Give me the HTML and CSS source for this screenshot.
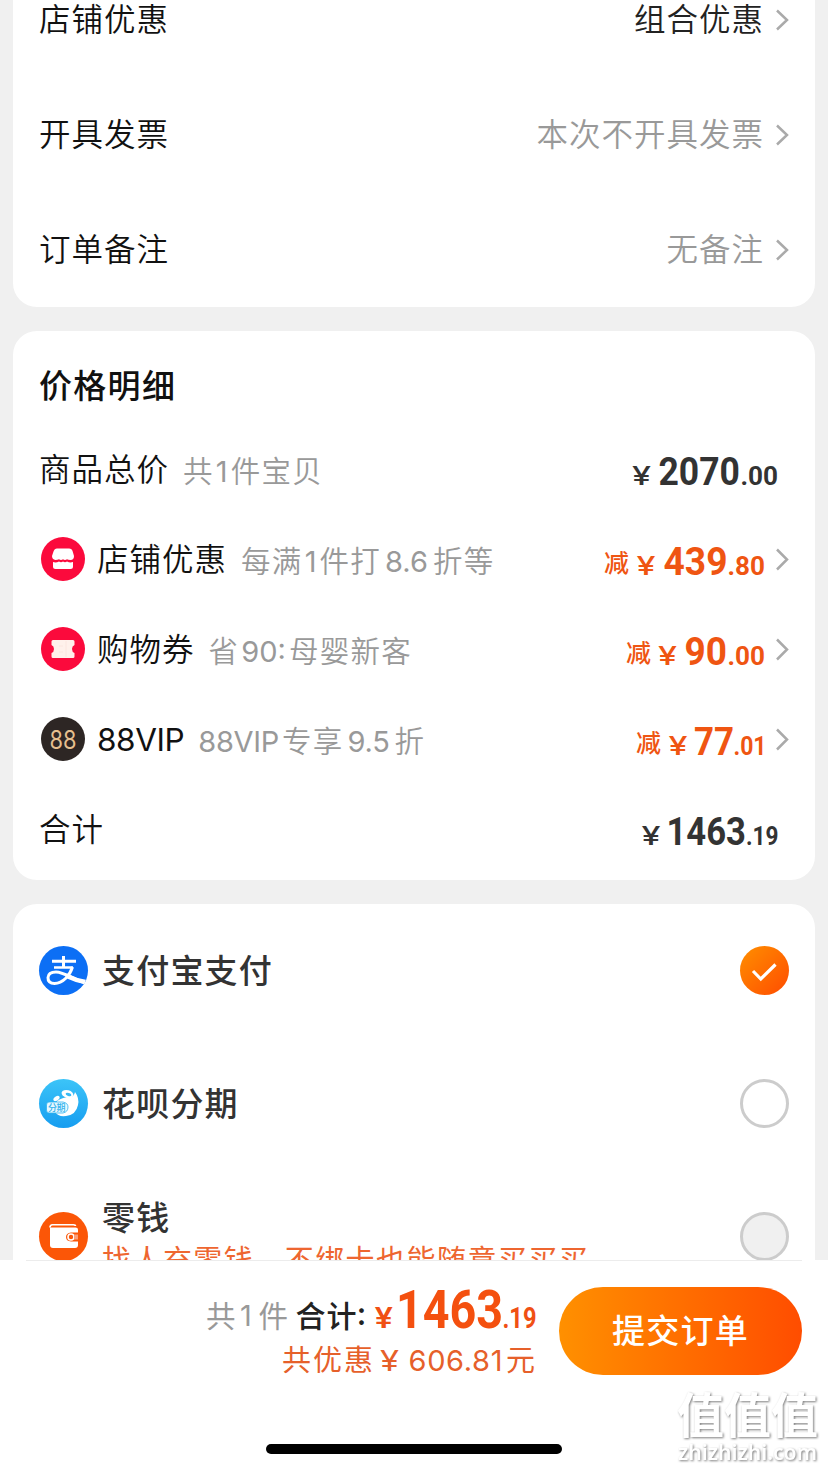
FILE: index.html
```html
<!DOCTYPE html>
<html lang="zh-CN">
<head>
<meta charset="utf-8">
<title>确认订单</title>
<link rel="stylesheet" href="styles.css">
</head>
<body>
<main class="content">
  <section class="card options">
    <div class="option"><span class="label">店铺优惠</span><span class="value dark">组合优惠</span><svg class="chevron" viewBox="0 0 14 22"><path d="M2 1.500L12 11L2 20.500"/></svg></div>
    <div class="option"><span class="label">开具发票</span><span class="value">本次不开具发票</span><svg class="chevron" viewBox="0 0 14 22"><path d="M2 1.500L12 11L2 20.500"/></svg></div>
    <div class="option"><span class="label">订单备注</span><span class="value">无备注</span><svg class="chevron" viewBox="0 0 14 22"><path d="M2 1.500L12 11L2 20.500"/></svg></div>
  </section>

  <section class="card prices">
    <h2 class="title">价格明细</h2>
    <div class="price-row">
      <span class="label">商品总价</span><span class="note">共<i>1</i>件宝贝</span>
      <svg class="amount" viewBox="0 0 190 90"><text class="yen" x="32" y="59.500" textLength="19" lengthAdjust="spacingAndGlyphs">¥</text><text class="int" x="58.500" y="60" textLength="81.500" lengthAdjust="spacingAndGlyphs">2070</text><text class="dec" x="140.500" y="60" textLength="37.500" lengthAdjust="spacingAndGlyphs">.00</text></svg>
    </div>
    <div class="price-row">
      <svg class="badge" viewBox="0 0 44 44"><circle cx="22" cy="22" r="22" fill="#fb0a3c"/><path d="M16 11.500H28Q31 11.500 31.700 14.500L33 19Q33 23 29.500 23Q27 23 26 22.300Q24 23.800 22 22.300Q20 23.800 18 22.300Q16.500 23 14.500 23Q11 22.500 11 19L12.500 14.500Q13.500 11.500 16 11.500Z" fill="#fff"/><path d="M12 25Q15 26 18 24.500Q20 26 22 24.500Q24 26 26 24.500Q29 26 32 25V29.500Q32 32 29.500 32H14.500Q12 32 12 29.500Z" fill="#fff"/></svg>
      <span class="label">店铺优惠</span><span class="note">每满<i>1</i>件打<i class="spaced">8.6</i>折等</span>
      <svg class="amount minus" viewBox="0 0 190 90"><text class="cut" x="4" y="57">减</text><text class="yen" x="36.500" y="59.500" textLength="19" lengthAdjust="spacingAndGlyphs">¥</text><text class="int" x="63.500" y="60" textLength="64" lengthAdjust="spacingAndGlyphs">439</text><text class="dec" x="127.500" y="60" textLength="37.500" lengthAdjust="spacingAndGlyphs">.80</text><path class="arrow" d="M177 34.500L187 44.500L177 54.500"/></svg>
    </div>
    <div class="price-row">
      <svg class="badge" viewBox="0 0 44 44"><circle cx="22" cy="22" r="22" fill="#fb0a3c"/><path d="M12 13H32Q33.500 13 33.500 14.500V18Q31 19 31 22T33.500 26V29.500Q33.500 31 32 31H12Q10.500 31 10.500 29.500V26Q13 25 13 22T10.500 18V14.500Q10.500 13 12 13Z" fill="#fff1eb"/><path d="M25 14V30M18 19H22M18 25H22" stroke="#fbe6df" stroke-width="1"/></svg>
      <span class="label">购物券</span><span class="note">省<i>90:</i>母婴新客</span>
      <svg class="amount minus" viewBox="0 0 190 90"><text class="cut" x="26" y="57">减</text><text class="yen" x="58" y="59.500" textLength="19" lengthAdjust="spacingAndGlyphs">¥</text><text class="int" x="84.500" y="60" textLength="42.500" lengthAdjust="spacingAndGlyphs">90</text><text class="dec" x="127.500" y="60" textLength="37.500" lengthAdjust="spacingAndGlyphs">.00</text><path class="arrow" d="M177 34.500L187 44.500L177 54.500"/></svg>
    </div>
    <div class="price-row">
      <svg class="badge" viewBox="0 0 44 44"><circle cx="22" cy="22" r="22" fill="#2d2624"/><text class="vip" x="8.500" y="31.500" textLength="27" lengthAdjust="spacingAndGlyphs">88</text></svg>
      <span class="label latin">88VIP</span><span class="note vip-note"><i>88VIP</i>专享<i class="spaced">9.5</i>折</span>
      <svg class="amount minus" viewBox="0 0 190 90"><text class="cut" x="36" y="57">减</text><text class="yen" x="68.500" y="59.500" textLength="19" lengthAdjust="spacingAndGlyphs">¥</text><text class="int" x="94" y="60" textLength="40" lengthAdjust="spacingAndGlyphs">77</text><text class="dec" x="133.500" y="60" textLength="33" lengthAdjust="spacingAndGlyphs">.01</text><path class="arrow" d="M177 34.500L187 44.500L177 54.500"/></svg>
    </div>
    <div class="price-row">
      <span class="label">合计</span>
      <svg class="amount" viewBox="0 0 190 90"><text class="yen" x="41.500" y="59.500" textLength="19" lengthAdjust="spacingAndGlyphs">¥</text><text class="int" x="66.500" y="60" textLength="79.500" lengthAdjust="spacingAndGlyphs">1463</text><text class="dec" x="146" y="60" textLength="32.500" lengthAdjust="spacingAndGlyphs">.19</text></svg>
    </div>
  </section>

  <section class="card payments">
    <div class="pay">
      <svg class="logo" viewBox="0 0 49 49"><defs><clipPath id="disc"><circle cx="24.500" cy="24.500" r="24.500"/></clipPath></defs><circle cx="24.500" cy="24.500" r="24.500" fill="#0c6ff5"/><g clip-path="url(#disc)" fill="none" stroke="#fff"><path d="M13 15.200H37M24.500 10V21" stroke-width="3"/><path d="M15 21.500H34" stroke-width="2.600"/><path d="M33.500 21C31 29 24 37.500 15.500 37.500C11 37.500 8.800 35 9 31.500C9.300 27.500 13 26 17 26C24 26 35 33 46 37" stroke-width="3"/><path d="M29 30.500Q37 34.500 46.500 36" stroke-width="4.500"/></g></svg>
      <span class="pay-name">支付宝支付</span>
      <svg class="radio" viewBox="0 0 49 49"><defs><linearGradient id="on" x1="0" y1="0" x2="1" y2="1"><stop stop-color="#ff8f00"/><stop offset="1" stop-color="#ff4c00"/></linearGradient></defs><circle cx="24.500" cy="24.500" r="24.500" fill="url(#on)"/><path d="M13 25L20.800 33L35.500 18.500" fill="none" stroke="#fff" stroke-width="3.200"/></svg>
    </div>
    <div class="pay">
      <svg class="logo" viewBox="0 0 49 49"><defs><linearGradient id="sky" x1="0" y1="0" x2="0" y2="1"><stop stop-color="#3cc4f8"/><stop offset="1" stop-color="#169df0"/></linearGradient></defs><circle cx="24.500" cy="24.500" r="24.500" fill="url(#sky)"/><path d="M31 18Q35 18 36 13Q40.500 19 39 26Q37 36 27 37Q19 38 16 33L18 22Q24 18 31 18Z" fill="#fff"/><ellipse cx="28.500" cy="15" rx="6" ry="3.800" transform="rotate(15 28.500 15)" fill="#fff"/><ellipse cx="29.500" cy="15.500" rx="3" ry="1.500" transform="rotate(20 29.500 15.500)" fill="#3abaf4"/><ellipse cx="17.500" cy="19.500" rx="3.500" ry="2" transform="rotate(-35 17.500 19.500)" fill="#fff"/><path d="M10 23H24Q29 24 29 28Q29 33 24 34H10Q7.500 34 7.500 31V26Q7.500 23 10 23Z" fill="#e8f8ff" stroke="#31b3ef" stroke-width=".8"/><text class="tiny" x="9" y="32" textLength="17.500">分期</text></svg>
      <span class="pay-name">花呗分期</span>
      <svg class="radio" viewBox="0 0 49 49"><circle cx="24.500" cy="24.500" r="23" fill="#fff" stroke="#ccc" stroke-width="3"/></svg>
    </div>
    <div class="pay">
      <svg class="logo" viewBox="0 0 49 49"><circle cx="24.500" cy="24.500" r="24.500" fill="#fb5607"/><path d="M11 15.500V33Q11 36 14 36H36Q39 36 39 33V17.500Q39 15.500 36.500 15.500H12" fill="#fff"/><path d="M11 15.500Q11 12.800 13.500 12.800H34.500Q36.500 12.800 36.500 14" fill="none" stroke="#fff" stroke-width="1.600"/><path d="M40 20.500H32Q27 21 27 25T32 29.500H40Z" fill="#fb5607"/><circle cx="32" cy="25" r="3" fill="#fb5607" stroke="#fff" stroke-width="1.600"/><path d="M35 22.500H39V27.500H35Z" fill="#f9a07c"/></svg>
      <span class="pay-name two">零钱<small>找人充零钱，不绑卡也能随意买买买</small></span>
      <svg class="radio" viewBox="0 0 49 49"><circle cx="24.500" cy="24.500" r="23" fill="#f0f0f0" stroke="#ccc" stroke-width="3"/></svg>
    </div>
  </section>
</main>

<footer class="bar">
  <div class="checkout">
    <svg class="summary" viewBox="0 0 340 120">
      <g class="count"><text x="6" y="66.500">共</text><text class="digit" x="40" y="66">1</text><text x="58.500" y="66.500">件</text></g>
      <text class="sum" x="95.500" y="67" textLength="61">合计</text><text class="sum" x="157" y="65">:</text>
      <text class="total-yen" x="174.500" y="67.500" textLength="18.500" lengthAdjust="spacingAndGlyphs">¥</text>
      <text class="total-int" x="196" y="68" textLength="107" lengthAdjust="spacingAndGlyphs">1463</text>
      <text class="total-dec" x="302.500" y="68" textLength="34" lengthAdjust="spacingAndGlyphs">.19</text>
      <g class="saved"><text x="82" y="111" textLength="91">共优惠</text><text x="180" y="110.500" textLength="19" lengthAdjust="spacingAndGlyphs">¥</text><text x="208.500" y="111" textLength="94">606.81</text><text x="306" y="111">元</text></g>
    </svg>
    <button class="submit">提交订单</button>
  </div>
  <div class="home"></div>
  <svg class="watermark" viewBox="0 0 150 80"><text class="mark" x="4" y="43" textLength="141" lengthAdjust="spacingAndGlyphs">值值值</text><text class="site" x="5" y="70" textLength="139" lengthAdjust="spacingAndGlyphs">zhizhizhi.com</text></svg>
</footer>
</body>
</html>
```
FILE: styles.css
```css
* { box-sizing: border-box; }

body {
  margin: 0;
  width: 828px;
  height: 1470px;
  overflow: hidden;
  background: #f0f0f0;
  color: #111;
  font-family: Inter, "Noto Sans CJK SC", sans-serif;
}

svg { display: block; flex: none; overflow: visible; }
svg text { white-space: pre; }

.content {
  height: 1260px;
  overflow: hidden;
  padding: 0 13px;
  display: flex;
  flex-direction: column;
  gap: 24px;
}

.card {
  flex: none;
  background: #fff;
  border-radius: 24px;
  padding: 0 25px 0 26px;
}

.options { height: 307px; border-radius: 0 0 24px 24px; overflow: hidden; }
.option { height: 115px; display: flex; align-items: center; }
.option:first-child { height: 77px; padding-bottom: 38px; }

.label {
  font-size: 31.500px;
  letter-spacing: 1px;
  line-height: 44px;
  white-space: nowrap;
  font-weight: 350;
}
.latin { letter-spacing: -0.4px; font-weight: 400; }

.value {
  margin-left: auto;
  font-size: 31.500px;
  letter-spacing: 1px;
  line-height: 44px;
  color: #999;
  font-weight: 350;
}
.dark { color: #222; }

.chevron { width: 14px; height: 22px; margin: 0 1px 0 11px; }
.chevron path, .arrow { fill: none; stroke: #aaa; stroke-width: 2.500; }

.prices { height: 549px; padding-top: 33px; }
.title {
  margin: 0;
  height: 61px;
  font-size: 33px;
  letter-spacing: 1.300px;
  line-height: 44px;
  font-weight: 500;
}
.price-row { height: 90px; display: flex; align-items: center; }
.badge { width: 44px; height: 44px; margin: -2px 12px 0 2px; }
.vip { font: 400 25px Inter; fill: #e6bf8e; }
.note {
  margin: 2px 0 0 14px;
  font-size: 29.500px;
  letter-spacing: 1.300px;
  line-height: 40px;
  font-weight: 350;
  color: #999;
  white-space: nowrap;
}
.note i { font-style: normal; font-weight: 400; font-size: 29px; letter-spacing: 0; margin: 0 3px 0 2px; }
.note .spaced { margin: 0 5px 0 4px; }
.vip-note { margin-left: 12px; }
.vip-note i { letter-spacing: -0.3px; }

.amount { width: 190px; height: 90px; margin-left: auto; fill: #333; }
.minus { fill: #ef5512; }
.yen { font: 500 26px Inter; }
.int { font: 700 39px Roboto; }
.dec { font: 700 26px Roboto; }
.cut { font: 500 25px "Noto Sans CJK SC"; }

.payments { height: 420px; }
.pay { height: 133px; display: flex; align-items: center; }
.logo { width: 49px; height: 49px; }
.pay-name {
  flex: 1;
  margin-left: 14px;
  font-size: 33px;
  letter-spacing: 1.200px;
  line-height: 44px;
  font-weight: 500;
  color: #333;
  white-space: nowrap;
}
.two { padding-top: 4px; }
.pay-name small {
  display: block;
  font-size: 29px;
  letter-spacing: 1.450px;
  line-height: 42px;
  font-weight: 400;
  color: #ee6630;
}
.radio { width: 49px; height: 49px; margin-right: 1px; }
.tiny { font: 500 9px "Noto Sans CJK SC"; fill: #36b2ec; }

.bar { position: relative; height: 210px; background: #fff; }
.checkout {
  height: 184px;
  margin: 0 26px;
  border-top: 1px solid #ececec;
  display: flex;
  align-items: flex-start;
  justify-content: flex-end;
}
.summary { width: 340px; height: 120px; margin: -1px 19px 0 0; }
.count { font: 400 29.500px "Noto Sans CJK SC"; fill: #999; }
.digit { font-family: Inter; font-size: 29px; }
.sum { font: 500 30px "Noto Sans CJK SC"; fill: #222; }
.total-yen { font: 600 28px Inter; fill: #f05014; }
.total-int { font: 700 53px Roboto; fill: #f4500f; }
.total-dec { font: 700 29px Roboto; fill: #f05014; }
.saved { font: 400 29px Inter, "Noto Sans CJK SC"; fill: #e6602a; }
.submit {
  width: 243px;
  height: 88px;
  margin-top: 26px;
  padding: 0;
  border: 0;
  border-radius: 44px;
  background: linear-gradient(90deg, #ff9000, #ff4d00);
  color: #fff;
  font: 500 33px/88px Inter, "Noto Sans CJK SC", sans-serif;
  letter-spacing: 1.300px;
}
.home { width: 296px; height: 10px; margin: 0 auto; border-radius: 5px; background: #000; }
.watermark {
  position: absolute;
  right: 5px;
  bottom: 0;
  width: 150px;
  height: 80px;
  fill: #fff;
  filter: drop-shadow(1px 1px 1px rgba(0, 0, 0, .5));
}
.mark { font: 700 48px "Noto Sans CJK SC"; }
.site { font: 600 21px "Noto Sans"; }
```
